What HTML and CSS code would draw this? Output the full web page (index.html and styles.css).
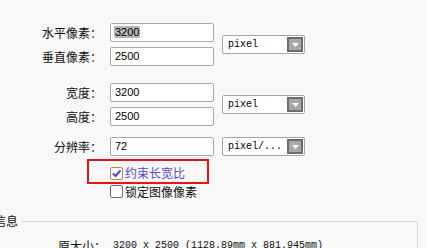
FILE: index.html
```html
<!DOCTYPE html>
<html>
<head>
<meta charset="utf-8">
<link rel="stylesheet" href="styles.css">
</head>
<body>
<div class="page">
  <div class="grid g1">
    <div class="label">水平像素：</div>
    <div class="field"><span class="sel">3200</span></div>
    <div class="select span2"><span class="stext">pixel</span><span class="btn"><svg width="7" height="4" viewBox="0 0 7 4"><path d="M0 0H7L3.5 4Z" fill="#fff"/></svg></span></div>
    <div class="label">垂直像素：</div>
    <div class="field">2500</div>
  </div>
  <div class="grid g2">
    <div class="label">宽度：</div>
    <div class="field">3200</div>
    <div class="select span2"><span class="stext">pixel</span><span class="btn"><svg width="7" height="4" viewBox="0 0 7 4"><path d="M0 0H7L3.5 4Z" fill="#fff"/></svg></span></div>
    <div class="label">高度：</div>
    <div class="field">2500</div>
  </div>
  <div class="grid g3">
    <div class="label">分辨率：</div>
    <div class="field">72</div>
    <div class="select"><span class="stext">pixel/...</span><span class="btn"><svg width="7" height="4" viewBox="0 0 7 4"><path d="M0 0H7L3.5 4Z" fill="#fff"/></svg></span></div>
  </div>
  <div class="highlight">
    <span class="check checked"><svg width="11" height="11" viewBox="0 0 11 11"><path d="M2 5.5L4.5 8L9.5 2.5" fill="none" stroke="#5846c8" stroke-width="2"/></svg></span>
    <span class="ctext active">约束长宽比</span>
  </div>
  <div class="crow">
    <span class="check"></span>
    <span class="ctext">锁定图像像素</span>
  </div>
  <div class="info">
    <span class="legend">信息</span>
    <div class="info-box">
      <div class="info-row"><span class="ilabel">原大小：</span><span class="ivalue">3200 x 2500 (1128.89mm x 881.945mm)</span></div>
    </div>
  </div>
</div>
</body>
</html>
```

FILE: styles.css
```css
html, body {
  margin: 0;
  padding: 0;
  background: #f8f8f8;
  overflow: hidden;
}
body {
  font-family: "Noto Sans CJK SC", "Noto Sans", sans-serif;
  font-size: 12px;
  color: #111;
  width: 427px;
  height: 248px;
}
.page {
  padding-top: 23px;
}
.grid {
  display: grid;
  grid-template-columns: 102px 104px 83px;
  grid-auto-rows: 19px;
  column-gap: 8px;
  row-gap: 5px;
}
.g1 { margin-bottom: 17px; }
.g2 { margin-bottom: 11px; }
.label {
  text-align: right;
  line-height: 19px;
  white-space: nowrap;
  grid-column: 1;
}
.field {
  box-sizing: border-box;
  height: 19px;
  border: 1px solid #a9a9a9;
  border-radius: 2px;
  background: #fff;
  font-family: "Liberation Sans", Arial, sans-serif;
  font-size: 11px;
  line-height: 17px;
  padding-left: 4px;
  color: #000;
  grid-column: 2;
}
.sel {
  background: #b6b6b6;
  display: inline-block;
  line-height: 12px;
  padding: 0 1px;
  margin-left: -1px;
}
.select {
  box-sizing: border-box;
  height: 19px;
  border: 1px solid #a6a6a6;
  border-radius: 2px;
  background: #fff;
  display: flex;
  align-items: center;
  justify-content: space-between;
  padding-left: 5px;
  padding-right: 1px;
  align-self: center;
  grid-column: 3;
}
.span2 { grid-row: 1 / span 2; }
.stext {
  font-family: "Liberation Mono", "DejaVu Sans Mono", monospace;
  font-size: 10px;
  color: #000;
}
.btn {
  box-sizing: border-box;
  width: 16px;
  height: 15px;
  border: 2px solid #6c6c6c;
  background: #a8a8a8;
  display: flex;
  align-items: center;
  justify-content: center;
}
.btn svg { display: block; }
.highlight {
  box-sizing: border-box;
  margin-top: 3px;
  margin-left: 87px;
  width: 122px;
  height: 25px;
  border: 2px solid #ee1111;
  display: flex;
  align-items: center;
  padding-left: 21px;
  padding-top: 3px;
}
.crow {
  margin-top: 1px;
  margin-left: 110px;
  height: 13px;
  display: flex;
  align-items: center;
}
.check {
  box-sizing: border-box;
  width: 13px;
  height: 13px;
  border: 1px solid #6f6f6f;
  border-radius: 2px;
  background: #fff;
  display: flex;
  align-items: center;
  justify-content: center;
  flex: none;
}
.check.checked {
  border-color: #c98149;
}
.check svg { display: block; }
.ctext {
  margin-left: 2px;
  line-height: 14px;
  white-space: nowrap;
}
.ctext.active { color: #5a48c9; }
.info {
  display: flex;
  align-items: flex-start;
  margin-left: -6px;
  margin-top: 16px;
}
.legend {
  line-height: 14px;
  padding-right: 3px;
  white-space: nowrap;
}
.info-box {
  flex: 1;
  margin-top: 7px;
  margin-right: 9px;
  border-top: 1px solid #d8d8d8;
  border-right: 1px solid #d8d8d8;
  border-top-right-radius: 4px;
  height: 40px;
  padding-top: 17px;
  padding-left: 37px;
  box-sizing: border-box;
}
.info-row {
  display: flex;
  align-items: center;
  line-height: 14px;
  white-space: nowrap;
}
.ilabel {
  width: 55px;
  flex: none;
}
.ivalue {
  font-family: "Liberation Mono", "DejaVu Sans Mono", monospace;
  font-size: 10px;
}
```
